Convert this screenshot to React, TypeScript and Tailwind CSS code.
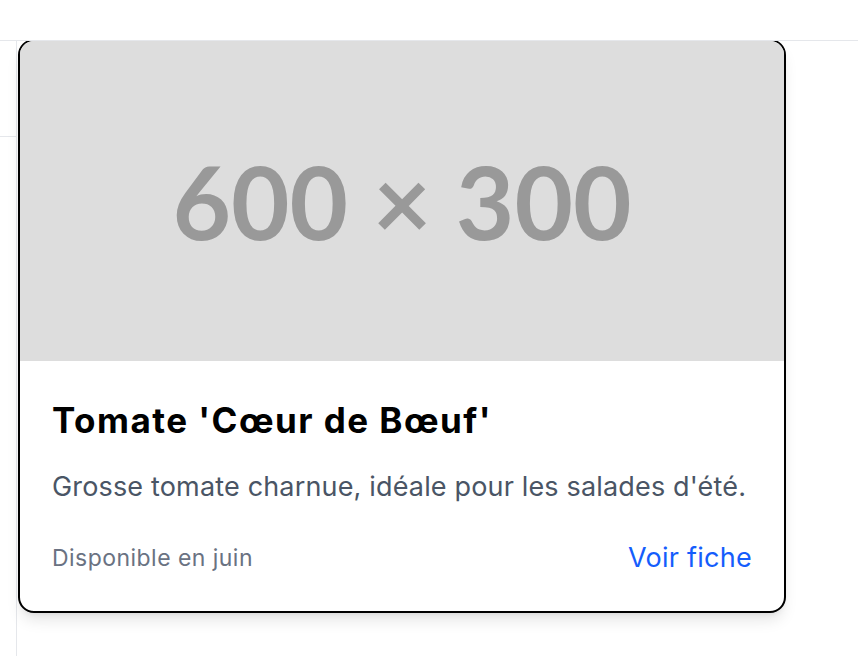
import React from 'react';

const product = {
  name: "Tomate 'Cœur de Bœuf'",
  description: "Grosse tomate charnue, idéale pour les salades d'été.",
  availability: 'Disponible en juin',
  link: 'Voir fiche',
};

const Placeholder = () => (
  <div className="flex h-80 w-full items-center justify-center bg-[#dddddd]">
    <span className="font-['Lato',sans-serif] text-[101px] font-bold leading-none text-[#999999]">
      600 × 300
    </span>
  </div>
);

const ProductCard = () => (
  <div className="w-[768px] overflow-hidden rounded-2xl border-2 border-black bg-white shadow-lg">
    <Placeholder />
    <div className="px-8 pt-[39px] pb-[35px]">
      <h3 className="text-[35px] leading-[40px] font-bold tracking-[0.042em] text-black">
        {product.name}
      </h3>
      <p className="mt-[29px] text-[27px] leading-9 tracking-[0.006em] text-gray-600">
        {product.description}
      </p>
      <div className="mt-[35px] flex h-9 items-center justify-between">
        <span className="text-[23px] leading-9 tracking-[0.02em] text-gray-500">
          {product.availability}
        </span>
        <a href="#" className="text-[27px] leading-9 tracking-[0.01em] text-blue-600">
          {product.link}
        </a>
      </div>
    </div>
  </div>
);

export default function App() {
  return (
    <div className="flex min-h-screen flex-col bg-white font-['Inter',sans-serif]">
      <header className="relative z-10 h-[41px] shrink-0 border-b border-gray-200 bg-white" />
      <div className="flex flex-1">
        <aside className="w-[17px] shrink-0 border-r border-gray-200">
          <div className="h-[96px] border-b border-gray-200" />
        </aside>
        <main className="-mt-[2px] pl-px">
          <ProductCard />
        </main>
      </div>
    </div>
  );
}
